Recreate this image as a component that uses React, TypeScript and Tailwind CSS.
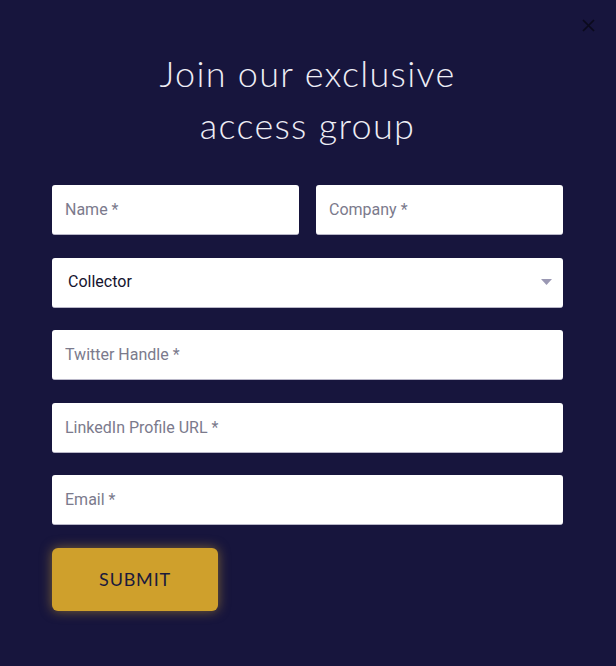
function Field({ placeholder }: { placeholder: string }) {
  return (
    <input
      placeholder={placeholder}
      className="h-[50px] w-full rounded-[3px] border-b border-[#b9b7c8] bg-white px-[13px] font-['Roboto'] text-[16px] text-[#1a1a2e] outline-none placeholder:text-[#7b7a8c]"
    />
  );
}

export default function App() {
  return (
    <div className="relative h-[666px] w-[616px] bg-[#17153d] pl-[52px] pr-[53px] pt-[47px]">
      <button className="absolute right-[21px] top-[19px] text-[#0b0a1c]">
        <svg width="13" height="13" viewBox="0 0 13 13" fill="none" stroke="currentColor" strokeWidth="1.7">
          <path d="M1 1l11 11M12 1L1 12" />
        </svg>
      </button>
      <h1 className="text-center font-['Lato'] text-[36px] font-light leading-[52px] tracking-[1.3px] text-[#eeedf5]">
        Join our exclusive
        <br />
        access group
      </h1>
      <form className="mt-[34px] flex flex-col gap-[22.5px]">
        <div className="flex gap-[17px]">
          <Field placeholder="Name *" />
          <Field placeholder="Company *" />
        </div>
        <div className="flex h-[50px] items-center justify-between rounded-[3px] border-b border-[#b9b7c8] bg-white pl-[16px] pr-[11px] font-['Roboto'] text-[16px] text-[#15142e]">
          <span>Collector</span>
          <svg width="11" height="7" viewBox="0 0 11 7">
            <path d="M0 0h11L5.5 6z" fill="#9a98b3" />
          </svg>
        </div>
        <Field placeholder="Twitter Handle *" />
        <Field placeholder="LinkedIn Profile URL *" />
        <Field placeholder="Email *" />
        <div>
          <button
            type="button"
            className="h-[63px] w-[166px] rounded-[6px] bg-[#cfa02c] font-['Lato'] text-[18px] tracking-[0.8px] text-[#1b1a3c] shadow-[0_0_12px_rgba(207,160,44,0.55)]"
          >
            SUBMIT
          </button>
        </div>
      </form>
    </div>
  );
}
